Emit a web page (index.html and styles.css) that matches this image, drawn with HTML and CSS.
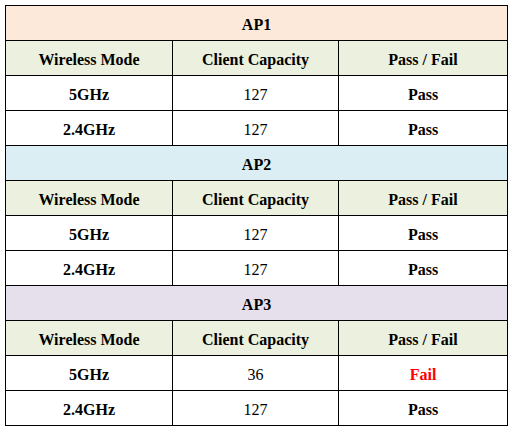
FILE: index.html
```html
<!DOCTYPE html>
<html>
<head>
<meta charset="utf-8">
<link rel="stylesheet" href="styles.css">
</head>
<body>
<table class="grid">
  <colgroup><col class="c1"><col class="c2"><col class="c3"></colgroup>
  <tr class="ap ap1"><td colspan="3">AP1</td></tr>
  <tr class="head"><td>Wireless Mode</td><td>Client Capacity</td><td>Pass / Fail</td></tr>
  <tr><td class="b">5GHz</td><td>127</td><td class="b">Pass</td></tr>
  <tr><td class="b">2.4GHz</td><td>127</td><td class="b">Pass</td></tr>
  <tr class="ap ap2"><td colspan="3">AP2</td></tr>
  <tr class="head"><td>Wireless Mode</td><td>Client Capacity</td><td>Pass / Fail</td></tr>
  <tr><td class="b">5GHz</td><td>127</td><td class="b">Pass</td></tr>
  <tr><td class="b">2.4GHz</td><td>127</td><td class="b">Pass</td></tr>
  <tr class="ap ap3"><td colspan="3">AP3</td></tr>
  <tr class="head"><td>Wireless Mode</td><td>Client Capacity</td><td>Pass / Fail</td></tr>
  <tr><td class="b">5GHz</td><td>36</td><td class="b fail">Fail</td></tr>
  <tr><td class="b">2.4GHz</td><td>127</td><td class="b">Pass</td></tr>
</table>
</body>
</html>
```

FILE: styles.css
```css
html, body {
  margin: 0;
  padding: 0;
  background: #ffffff;
}
body {
  padding: 5px 0 0 5px;
}
.grid {
  border-collapse: collapse;
  table-layout: fixed;
  width: 502px;
  font-family: "Liberation Serif", "Times New Roman", serif;
  font-size: 16px;
  color: #000;
}
.c1 { width: 167px; }
.c2 { width: 166px; }
.c3 { width: 169px; }
.grid td {
  border: 1px solid #000;
  height: 34px;
  padding: 3px 0 0 0;
  text-align: center;
  vertical-align: middle;
  box-sizing: border-box;
}
.grid tr {
  height: 35px;
}
.ap td, .head td, .b {
  font-weight: bold;
}
.ap1 td { background: #fde9d9; }
.ap2 td { background: #daeef3; }
.ap3 td { background: #e5e0ec; }
.head td { background: #ebf1de; }
.fail { color: #ff0000; }
```
